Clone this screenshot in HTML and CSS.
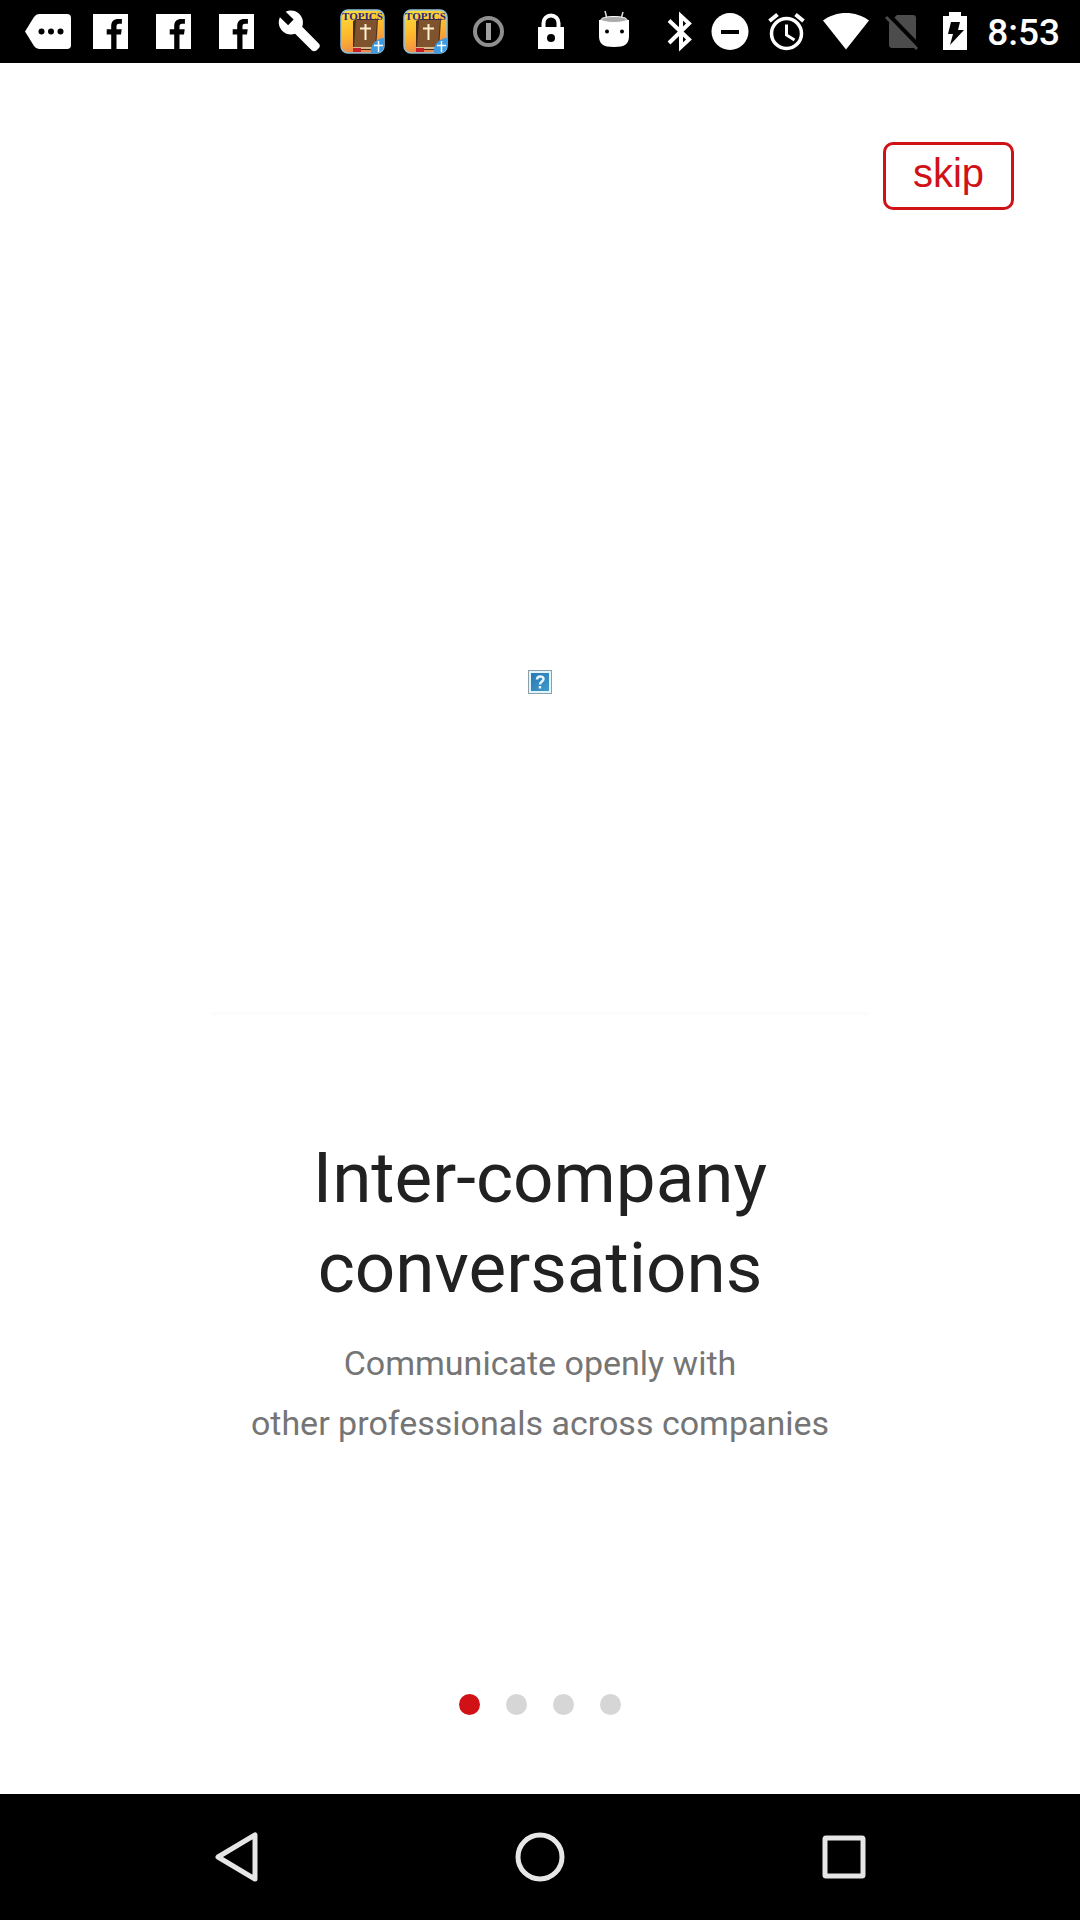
FILE: index.html
```html
<!DOCTYPE html>
<html lang="en">
<head>
<meta charset="utf-8">
<meta name="viewport" content="width=device-width, initial-scale=1">
<title>Inter-company conversations</title>
<link rel="stylesheet" href="styles.css">
</head>
<body>
<svg class="defs" aria-hidden="true">
  <defs>
    <linearGradient id="sun" x1="0" y1="0" x2="0.3" y2="1"><stop offset="0" stop-color="#fbe23c"/><stop offset="0.6" stop-color="#fdb62c"/><stop offset="1" stop-color="#f08a4a"/></linearGradient>
    <linearGradient id="glass" x1="0" y1="0" x2="1" y2="1"><stop offset="0" stop-color="#2a78b4"/><stop offset="1" stop-color="#3f9acb"/></linearGradient>
    <symbol id="fb" viewBox="0 0 63 63"><path fill="#fff" d="M14 14h35v35H37.500V34.500h4.500l.700-5.200h-5.200v-3c0-1.600.700-2.600 2.600-2.600h2.800v-4.600c-.600-.100-2.100-.200-3.700-.200-4.300 0-7 2.500-7 7v3.400h-4.500v5.200h4.500V49H14z"/></symbol>
    <symbol id="topics" viewBox="0 0 63 63">
      <rect x="10" y="10" width="43" height="43" rx="7" fill="url(#sun)" stroke="#8fc0dc" stroke-width="1.500"/>
      <path fill="#4a2c1a" d="M22 21l4-2h21l-2 31H22z"/>
      <path fill="#80532f" d="M25 20h21l-2 27H23z"/>
      <path fill="#d9b98a" d="M22 47h22v2H22z"/>
      <path fill="#c8202a" d="M22 48h8v4h-8z"/>
      <path fill="none" stroke="#fff0d0" stroke-width="2" d="M34.500 24v16M29 28.500h11"/>
      <path fill="#3d9be4" d="M53 38v8a7 7 0 0 1-7 7h-6c-1-8 4-14 13-15z"/>
      <path fill="none" stroke="#fff" stroke-width="1.500" d="M47.500 41v11M43 45.500h9"/>
      <text x="31.500" y="19.500" text-anchor="middle" class="topics-label">TOPICS</text>
    </symbol>
  </defs>
</svg>

<header class="status">
  <div class="notices">
    <svg viewBox="0 0 63 63"><path fill="#fff" d="M23 14h28q4 0 4 4v27q0 4-4 4H23q-3 0-5-3L9 31.500 18 17q2-3 5-3z"/><circle cx="25.500" cy="31.500" r="3"/><circle cx="35" cy="31.500" r="3"/><circle cx="44.500" cy="31.500" r="3"/></svg>
    <svg viewBox="0 0 63 63"><use href="#fb"/></svg>
    <svg viewBox="0 0 63 63"><use href="#fb"/></svg>
    <svg viewBox="0 0 63 63"><use href="#fb"/></svg>
    <svg viewBox="0 0 63 63"><path transform="translate(9 8.500) scale(1.850)" fill="#fff" d="M22.700 19l-9.100-9.100c.9-2.300.4-5-1.500-6.900-2-2-5-2.400-7.400-1.300L9 6 6 9 1.600 4.700C.4 7.100.9 10.100 2.900 12.100c1.900 1.900 4.600 2.400 6.900 1.500l9.100 9.100c.6.600 1.800.6 2.400 0l1.400-1.400c.6-.6.6-1.700 0-2.300z"/></svg>
    <svg viewBox="0 0 63 63"><use href="#topics"/></svg>
    <svg viewBox="0 0 63 63"><use href="#topics"/></svg>
    <svg viewBox="0 0 63 63"><circle cx="31.500" cy="31.500" r="13.500" fill="none" stroke="#8f8f8f" stroke-width="4"/><path stroke="#a0a0a0" stroke-width="5" d="M31.500 23v17"/></svg>
    <svg viewBox="0 0 63 63"><path fill="none" stroke="#fff" stroke-width="4" d="M23.500 28v-5a7.500 7.500 0 0 1 15 0v5"/><rect x="18" y="27" width="26" height="22" fill="#fff"/><circle cx="31" cy="38" r="4"/></svg>
    <svg viewBox="0 0 63 63"><path stroke="#ddd" stroke-width="1.500" d="M22 11l2 8M40 12l-2 7"/><path fill="#fff" d="M16 20h30v16c0 8-4 11-15 11s-15-3-15-11z"/><ellipse cx="31" cy="19.500" rx="13" ry="3" fill="#aaa" stroke="#fff"/><circle cx="24" cy="31.500" r="2"/><circle cx="39" cy="31.500" r="2"/></svg>
  </div>
  <div class="system">
    <svg width="28" height="63" viewBox="0 0 28 63"><path fill="none" stroke="#fff" stroke-width="4" d="M2 20.500l20 19-8 7.500V16l8 7.500-20 19.500"/></svg>
    <svg width="38" height="63" viewBox="0 0 38 63"><circle cx="19" cy="31.500" r="18.500" fill="#fff"/><path stroke="#000" stroke-width="4" d="M10 32h18"/></svg>
    <svg width="42" height="63" viewBox="0 0 42 63"><g fill="none" stroke="#fff"><circle cx="21.500" cy="33.500" r="15" stroke-width="3.500"/><path stroke-width="3" d="M21.500 24.500V35l8 5"/><path stroke-width="4" d="M4.500 21l8-6.500M38.500 21l-8-6.500"/></g></svg>
    <svg width="46" height="63" viewBox="0 0 46 63"><path fill="#fff" d="M0 20.500C13 10.500 33 10.500 46 20.500L23 49.500z"/></svg>
    <svg width="36" height="63" viewBox="0 0 36 63"><path fill="#4c4c4c" d="M12 15h16q3 0 3 3v27q0 3-3 3H7q-3 0-3-3V23z"/><path stroke="#000" stroke-width="4" d="M3 14l31 32"/><path stroke="#4c4c4c" stroke-width="3" d="M1 17l31 32"/></svg>
    <svg width="34" height="63" viewBox="0 0 34 63"><path fill="#fff" d="M12 12h12v4h6v34H6V16h6z"/><path d="M14 22h9l-2 8h6L13 45l3-11h-5z"/></svg>
    <time class="clock">8:53</time>
  </div>
</header>

<main class="intro">
  <button type="button" class="skip">skip</button>

  <div class="art">
    <svg class="missing" viewBox="0 0 24 24" role="img" aria-label="Missing picture"><path fill="#8ba0ab" d="M0 0h24v24H0z"/><path fill="#e2f4fb" d="M1 1h22v22H1z"/><path fill="url(#glass)" d="M3 3h18v18H3z"/><path fill="none" stroke="#e8f6fc" stroke-width="2.500" d="M9 9.500c0-4 6.500-4 6.500-.5 0 2.500-3.500 2.500-3.500 5.500M12 16v2.500"/></svg>
  </div>
  <hr class="rule">

  <section class="copy">
    <h1>Inter-company<br>conversations</h1>
    <p>Communicate openly with<br>other professionals across companies</p>
  </section>

  <nav class="dots" aria-label="Pages">
    <button type="button" class="dot current" aria-label="Page 1" aria-current="true"></button>
    <button type="button" class="dot" aria-label="Page 2"></button>
    <button type="button" class="dot" aria-label="Page 3"></button>
    <button type="button" class="dot" aria-label="Page 4"></button>
  </nav>
</main>

<footer class="keys">
  <button type="button" aria-label="Back"><svg viewBox="0 0 56 56"><path d="M47 6v44L10 28z"/></svg></button>
  <button type="button" aria-label="Home"><svg viewBox="0 0 56 56"><circle cx="28" cy="28" r="22"/></svg></button>
  <button type="button" aria-label="Recent apps"><svg viewBox="0 0 56 56"><rect x="9" y="9" width="38" height="38" rx="1"/></svg></button>
</footer>
</body>
</html>
```
FILE: styles.css
```css
* {
  box-sizing: border-box;
}

body {
  margin: 0;
  min-height: 100vh;
  display: flex;
  flex-direction: column;
  background: #fff;
  color: #212121;
  font-family: Roboto, sans-serif;
}

button {
  margin: 0;
  padding: 0;
  border: 0;
  background: none;
  font: inherit;
  cursor: pointer;
}

svg {
  display: block;
  flex: none;
}

.defs {
  position: absolute;
  width: 0;
  height: 0;
}

/* Status bar */
.status {
  display: flex;
  justify-content: space-between;
  height: 63px;
  padding: 0 20px 0 16px;
  background: #000;
}

.notices {
  display: flex;
  align-items: center;
}

.notices svg {
  width: 63px;
  height: 63px;
}

.topics-label {
  fill: #2a2680;
  font: bold 11px "Liberation Serif", serif;
}

.system {
  display: flex;
  align-items: center;
  gap: 16px;
}

.clock {
  padding-top: 2px;
  color: #fff;
  font-size: 37px;
  font-weight: 500;
  line-height: 61px;
}

/* Intro page */
.intro {
  flex: 1;
  display: flex;
  flex-direction: column;
}

.skip {
  align-self: flex-end;
  width: 131px;
  height: 68px;
  margin: 79px 66px 0 0;
  padding-bottom: 6px;
  border: 3px solid #d01217;
  border-radius: 10px;
  color: #d01217;
  font: 40px "Liberation Sans", Arial, sans-serif;
}

.art {
  flex: 1;
  display: flex;
  justify-content: center;
  align-items: center;
  padding-top: 141px;
  min-height: 200px;
}

.missing {
  width: 24px;
  height: 24px;
}

.rule {
  width: 61%;
  height: 3px;
  margin: 0 auto;
  border: 0;
  background: #fcfcfc;
}

.copy {
  margin-top: 118px;
  text-align: center;
}

h1 {
  margin: 0;
  font-size: 71px;
  font-weight: 400;
  line-height: 90px;
}

p {
  margin: 20px 0 0;
  color: #757575;
  font-size: 34px;
  line-height: 60px;
}

.dots {
  display: flex;
  justify-content: center;
  gap: 26px;
  margin: 241px 0 79px;
}

.dot {
  width: 21px;
  height: 21px;
  border-radius: 50%;
  background: #d6d6d6;
}

.dot.current {
  background: #d01217;
}

/* Navigation keys */
.keys {
  display: flex;
  justify-content: center;
  height: 126px;
  padding: 0 84px;
  background: #000;
}

.keys button {
  flex: 1;
  display: flex;
  justify-content: center;
  align-items: center;
}

.keys svg {
  width: 56px;
  height: 56px;
  fill: none;
  stroke: #e6e6e6;
  stroke-width: 5;
  stroke-linejoin: round;
}
```
